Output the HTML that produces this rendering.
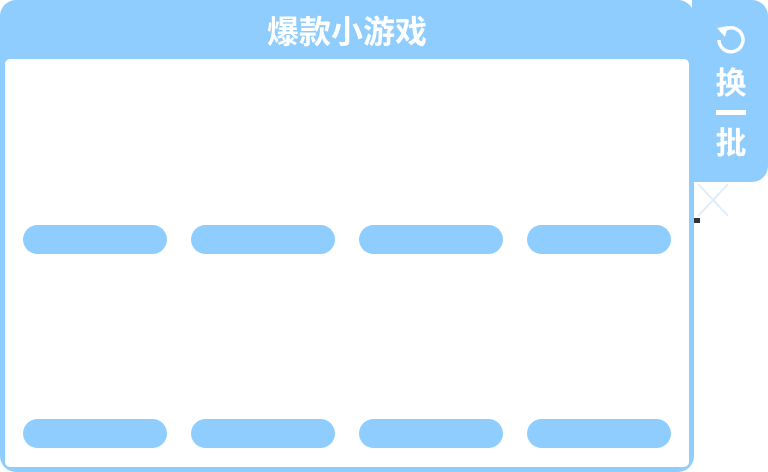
<!DOCTYPE html>
<html><head><meta charset="utf-8"><style>
html,body{margin:0;padding:0;width:768px;height:472px;background:#fff;overflow:hidden;position:relative;font-family:"Liberation Sans","Noto Sans CJK SC",sans-serif}
.panel{position:absolute;left:0;top:0;width:694px;height:472px;background:#8fcdfe;border-radius:16px}
.inner{position:absolute;left:5px;top:59px;width:684px;height:408px;background:#fff;border-radius:5px}
.title{position:absolute;left:0;top:10px;width:694px;text-align:center;color:#fff;font-size:32px;font-weight:bold;line-height:44px}
.tab{position:absolute;left:692px;top:0;width:76px;height:182px;background:#8fcdfe;border-radius:0 16px 16px 0}
.tab .t{position:absolute;left:0;width:78px;text-align:center;color:#fff;font-size:31px;font-weight:bold;line-height:36px}
.pill{position:absolute;width:144px;height:29px;border-radius:15px;background:#8fcdfe}
</style></head><body>
<div class="panel"></div>
<div class="inner"></div>
<div class="title">爆款小游戏</div>
<div class="tab">
<svg style="position:absolute;left:22px;top:22px" width="34" height="34" viewBox="0 0 34 34"><path d="M10 8 A12 12 0 1 1 5 18" fill="none" stroke="#fff" stroke-width="3.5"/><path d="M3 6 L14 4 L11 15 Z" fill="#fff"/></svg>
<div class="t" style="top:66px">换</div>
<div style="position:absolute;left:24px;top:110px;width:30px;height:5px;background:#fff"></div>
<div class="t" style="top:126px">批</div>
</div>
<svg style="position:absolute;left:697px;top:183px" width="32" height="34"><path d="M1 1 L31 33 M31 1 L1 33" stroke="#dceefc" stroke-width="2"/></svg>
<div style="position:absolute;left:694px;top:218px;width:6px;height:5px;background:#333"></div>
<div class="pill" style="left:23px;top:225px"></div>
<div class="pill" style="left:191px;top:225px"></div>
<div class="pill" style="left:359px;top:225px"></div>
<div class="pill" style="left:527px;top:225px"></div>
<div class="pill" style="left:23px;top:419px"></div>
<div class="pill" style="left:191px;top:419px"></div>
<div class="pill" style="left:359px;top:419px"></div>
<div class="pill" style="left:527px;top:419px"></div>
</body></html>
